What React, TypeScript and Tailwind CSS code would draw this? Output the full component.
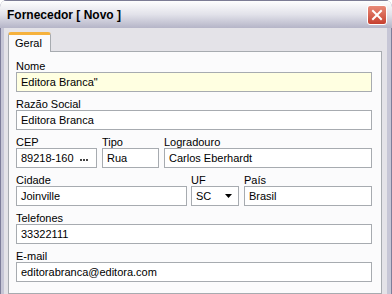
import React from "react";

const font = { fontFamily: '"Liberation Sans", Arial, sans-serif' };

function Label({ children }: { children: React.ReactNode }) {
  return <div className="h-[18px] pt-[6px] leading-[12px] text-[11px] text-black whitespace-nowrap">{children}</div>;
}

function Box({ children, className = "", bg = "bg-white" }: { children?: React.ReactNode; className?: string; bg?: string }) {
  return (
    <div className={`h-[20px] border border-[#a7abb0] ${bg} flex items-center pl-[4px] text-[11px] text-black whitespace-nowrap ${className}`}>
      {children}
    </div>
  );
}

export default function App() {
  return (
    <div className="w-[392px] h-[294px] overflow-hidden bg-white" style={font}>
      <div className="w-[392px] h-[294px] flex flex-col rounded-t-[7px] overflow-hidden bg-[#7e7e9a]">
        {/* title bar */}
        <div className="h-[28px] shrink-0 flex items-center justify-between pl-[7px] pr-[5px] bg-gradient-to-b from-[#fefefe] via-[#e2e2ea] to-[#b5b5c8] border-t border-[#7c7c94]">
          <span className="text-[12px] font-bold text-black leading-none">Fornecedor [ Novo ]</span>
          <div className="w-[20px] h-[20px] rounded-[3px] border border-white bg-gradient-to-b from-[#e88a78] to-[#c63e2e] flex items-center justify-center">
            <svg width="12" height="12" viewBox="0 0 12 12">
              <path d="M2 2 L10 10 M10 2 L2 10" stroke="white" strokeWidth="2" strokeLinecap="square" />
            </svg>
          </div>
        </div>
        {/* body */}
        <div className="flex-1 flex ml-[1px] mr-[1px] border-l-[3px] border-r-[4px] border-[#c6c6d6]">
          <div className="flex-1 bg-[#e4e3e8] pl-[4px] pr-[5px] pt-[4px] flex flex-col">
            <div className="flex">
              <div className="h-[20px] w-[43px] bg-[#fbfbfc] border-t-[3px] border-[#f6b23d] rounded-t-[3px] border-x border-x-[#a7abb0] text-[11px] pl-[6px] leading-[16px] relative z-10 -mb-[1px]">
                Geral
              </div>
            </div>
            <div className="flex-1 bg-[#fbfbfc] border border-[#a7abb0] pl-[7px] pr-[9px] pt-[2px] flex flex-col">
              <Label>Nome</Label>
              <Box bg="bg-[#ffffe1]">Editora Branca"</Box>
              <Label>Razão Social</Label>
              <Box>Editora Branca</Box>
              <div className="flex">
                <div className="w-[81px] flex flex-col">
                  <Label>CEP</Label>
                  <Box className="justify-between pr-[8px]">
                    <span>89218-160</span>
                    <span className="flex gap-[1px] mt-[3px]">
                      <span className="w-[2px] h-[2px] bg-[#444]" />
                      <span className="w-[2px] h-[2px] bg-[#444]" />
                      <span className="w-[2px] h-[2px] bg-[#444]" />
                    </span>
                  </Box>
                </div>
                <div className="w-[57px] ml-[5px] flex flex-col">
                  <Label>Tipo</Label>
                  <Box>Rua</Box>
                </div>
                <div className="flex-1 ml-[5px] flex flex-col">
                  <Label>Logradouro</Label>
                  <Box>Carlos Eberhardt</Box>
                </div>
              </div>
              <div className="flex">
                <div className="w-[171px] flex flex-col">
                  <Label>Cidade</Label>
                  <Box>Joinville</Box>
                </div>
                <div className="w-[48px] ml-[4px] flex flex-col">
                  <Label>UF</Label>
                  <Box className="justify-between pr-[6px]">
                    <span>SC</span>
                    <svg width="7" height="4" viewBox="0 0 7 4"><path d="M0 0 H7 L3.5 4 Z" fill="black" /></svg>
                  </Box>
                </div>
                <div className="flex-1 ml-[5px] flex flex-col">
                  <Label>País</Label>
                  <Box>Brasil</Box>
                </div>
              </div>
              <Label>Telefones</Label>
              <Box>33322111</Box>
              <Label>E-mail</Label>
              <Box>editorabranca@editora.com</Box>
            </div>
          </div>
        </div>
      </div>
    </div>
  );
}
